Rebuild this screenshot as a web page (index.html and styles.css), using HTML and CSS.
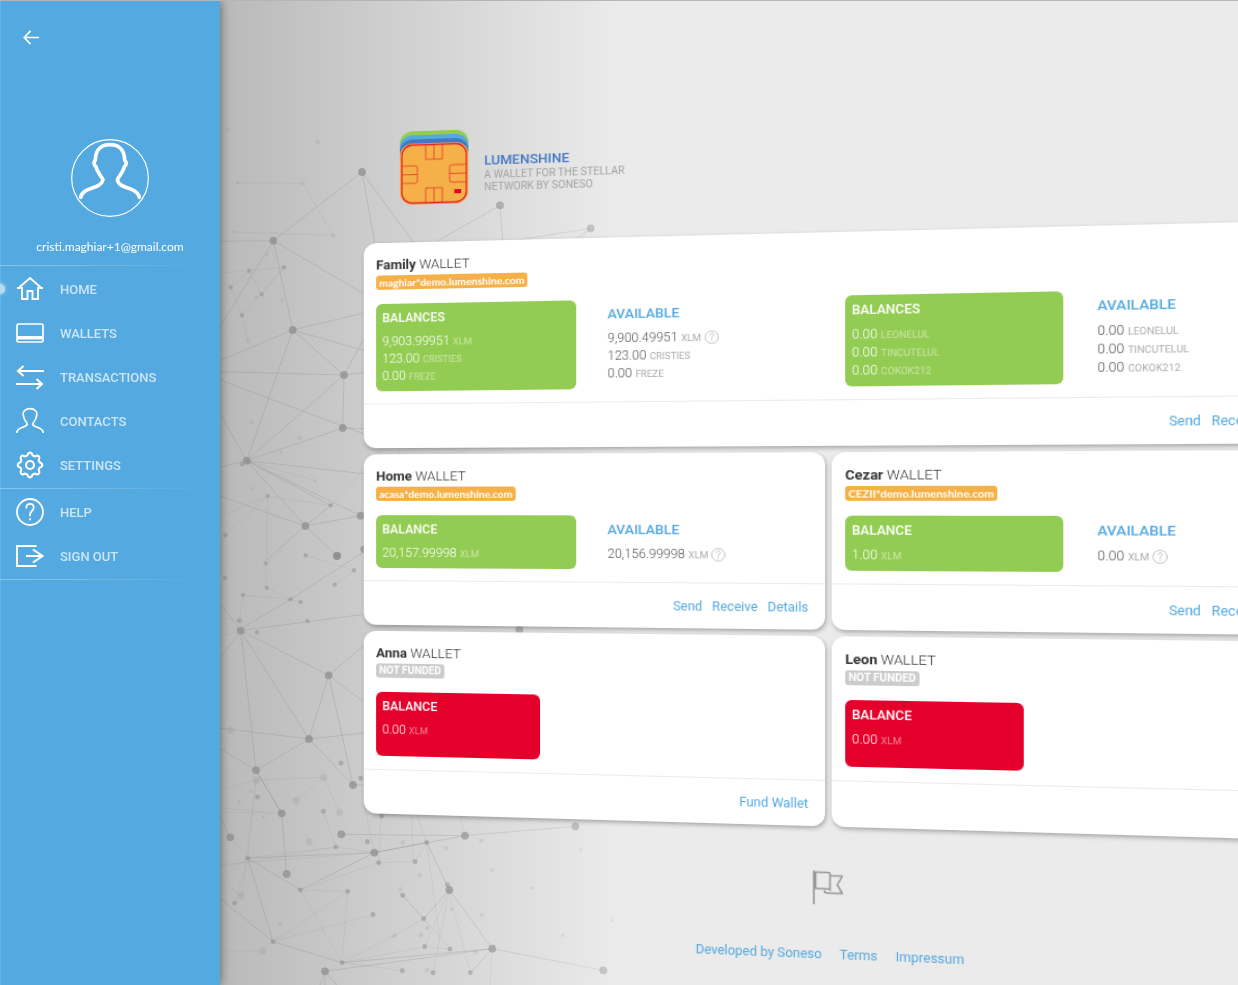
FILE: index.html
```html
<!DOCTYPE html>
<html lang="en">
<head>
<meta charset="utf-8">
<title>Lumenshine</title>
<meta name="viewport" content="width=device-width, initial-scale=1">
<link rel="stylesheet" href="styles.css">
</head>
<body>
<svg class="defs" aria-hidden="true">
  <symbol id="help" viewBox="0 0 28 28">
    <g fill="none" stroke="currentColor" stroke-width="1.8" stroke-linecap="round">
      <circle cx="14" cy="14" r="13"/>
      <path d="M10.3 9.6C10.5 4.5 17.7 4.500 17.7 9.600C17.700 12.800 14 12.800 14 17V17.500"/>
      <path d="M14 21v.6"/>
    </g>
  </symbol>
</svg>
<div class="app">
  <aside class="sidebar">
    <button class="back" type="button" aria-label="Close menu">
      <svg viewBox="0 0 18 16"><path d="M17 8H1.500M8 1L1.200 8L8 15" fill="none" stroke="currentColor" stroke-width="1.800"/></svg>
    </button>
    <div class="profile">
      <svg class="avatar" viewBox="213 417 234 234" aria-hidden="true">
        <g fill="none" stroke="#fff">
          <circle cx="330" cy="534" r="115" stroke-width="3.500"/>
          <path stroke-width="11" stroke-linecap="round" stroke-linejoin="round" d="M242 592C250 558 302 570 309 539C305 530 291 516 288 500C280 494 281 484 286 481C286 448 306 434 330 434C354 434 374 448 374 481C380 484 381 494 373 500C370 516 356 530 352 539C358 570 410 558 418 592"/>
        </g>
      </svg>
      <p class="email">cristi.maghiar+1@gmail.com</p>
    </div>
    <nav class="nav">
      <a class="item active" href="#">
        <svg class="icon" viewBox="0 0 28 28"><path d="M2 13.500L14 3L26 13.500M1 13H6V24H11.500V16H16.500V24H22V13H27" fill="none" stroke="currentColor" stroke-width="1.900"/></svg>
        <span>HOME</span>
      </a>
      <a class="item" href="#">
        <svg class="icon" viewBox="0 0 28 28"><rect x="1" y="5" width="26" height="18" rx="1.500" fill="none" stroke="currentColor" stroke-width="1.700"/><path d="M1.500 17H26.500V20.500H1.500Z" fill="currentColor"/></svg>
        <span>WALLETS</span>
      </a>
      <a class="item" href="#">
        <svg class="icon" viewBox="0 0 28 28"><path d="M28 8H2M7.500 3L2 8L7.500 13M0 21H26M20.500 16L26 21L20.500 26" fill="none" stroke="currentColor" stroke-width="2"/></svg>
        <span>TRANSACTIONS</span>
      </a>
      <a class="item" href="#">
        <svg class="icon" viewBox="48 442 84 84"><path d="M50 520C51 500 78 506 82 494C80 486 72 482 71 471C65 456 77 447 90 447C103 447 115 456 109 471C108 482 100 486 98 494C102 506 129 500 130 520" fill="none" stroke="currentColor" stroke-width="5"/></svg>
        <span>CONTACTS</span>
      </a>
      <a class="item" href="#">
        <svg class="icon" viewBox="-14 -14 28 28"><g fill="none" stroke="currentColor" stroke-width="2.200"><circle r="4"/><path d="M11 -2A2.200 2.200 0 0 1 11 2A2.900 2.900 0 0 0 9.200 6.400A2.200 2.200 0 0 1 6.400 9.200A2.900 2.900 0 0 0 2 11A2.200 2.200 0 0 1 -2 11A2.900 2.900 0 0 0 -6.400 9.200A2.200 2.200 0 0 1 -9.200 6.400A2.900 2.900 0 0 0 -11 2A2.200 2.200 0 0 1 -11 -2A2.900 2.900 0 0 0 -9.200 -6.400A2.200 2.200 0 0 1 -6.400 -9.200A2.900 2.900 0 0 0 -2 -11A2.200 2.200 0 0 1 2 -11A2.900 2.900 0 0 0 6.400 -9.200A2.200 2.200 0 0 1 9.200 -6.400A2.900 2.900 0 0 0 11 -2Z"/></g></svg>
        <span>SETTINGS</span>
      </a>
    </nav>
    <nav class="nav nav-last">
      <a class="item" href="#">
        <svg class="icon"><use href="#help"/></svg>
        <span>HELP</span>
      </a>
      <a class="item" href="#">
        <svg class="icon" viewBox="0 0 28 28"><path d="M20.500 4H1V24H20.500M10 14H26.500M17 7.500L26.500 14L17 20.500" fill="none" stroke="currentColor" stroke-width="2"/></svg>
        <span>SIGN OUT</span>
      </a>
    </nav>
  </aside>

  <main class="main">
    <svg class="mesh" viewBox="0 0 3054 2955" preserveAspectRatio="xMinYMin meet" aria-hidden="true">
      <g transform="translate(0 360)">
        <g class="lines">
          <path d="M0 364L160 362L426 156L466 380M426 156L590 380M160 362L0 620M160 362L440 526M160 362L218 630L440 577M218 630L0 722M218 630L440 694M218 630L372 765L440 756M218 630L80 1022L0 880M0 755L372 765L368 924L440 926M0 780L440 945M368 924L80 1022L372 765L440 640M80 1022L0 1042M80 1022L440 1062M80 1022L256 1218L0 1128M80 1022L332 1156L256 1218L422 1187M80 1022L422 1187M256 1218L351 1308M256 1218L140 1320M640 370L840 256L849 370M880 362L1112 325L1060 360M1112 325L1080 356"/>
        </g>
        <g class="lines faint">
          <path d="M52 188L248 190L340 346M44 336L340 346M32 502L87 452L0 460M125 523L192 442L87 452L125 523M32 502L66 586L0 640M66 586L84 664M192 442L66 586M143 1128L0 1190M143 1128L140 1320M143 1128L332 1156M332 1156L440 1040M80 1022L284 1082M16 1246L143 1128M490 984L440 1040M536 990V1002M690 985L740 1000"/>
        </g>
        <g class="big">
          <circle cx="160" cy="362" r="11"/><circle cx="426" cy="156" r="11"/><circle cx="218" cy="630" r="11"/><circle cx="372" cy="765" r="11"/><circle cx="368" cy="924" r="11"/><circle cx="80" cy="1022" r="11"/><circle cx="256" cy="1218" r="11"/><circle cx="351" cy="1308" r="11"/><circle cx="422" cy="1187" r="11"/><circle cx="432" cy="1288" r="10"/><circle cx="840" cy="256" r="11"/><circle cx="1112" cy="325" r="11"/>
        </g>
        <g class="small">
          <circle cx="32" cy="502" r="6"/><circle cx="87" cy="452" r="6"/><circle cx="125" cy="523" r="6"/><circle cx="192" cy="442" r="6"/><circle cx="66" cy="586" r="6"/><circle cx="143" cy="1128" r="6"/><circle cx="332" cy="1156" r="6"/><circle cx="16" cy="1246" r="6"/><circle cx="257" cy="1306" r="6"/><circle cx="66" cy="1033" r="6"/>
        </g>
        <g class="ghost">
          <circle cx="24" cy="28" r="7"/><circle cx="293" cy="66" r="7"/><circle cx="52" cy="188" r="6"/><circle cx="248" cy="190" r="6"/><circle cx="44" cy="336" r="6"/><circle cx="340" cy="346" r="6"/><circle cx="141" cy="404" r="6"/><circle cx="108" cy="532" r="6"/><circle cx="187" cy="539" r="6"/><circle cx="84" cy="664" r="6"/><circle cx="95" cy="907" r="6"/><circle cx="239" cy="953" r="6"/><circle cx="183" cy="996" r="5"/><circle cx="284" cy="1082" r="5"/><circle cx="98" cy="1105" r="5"/>
        </g>
      </g>
      <g transform="translate(0 1650)">
        <g class="lines">
          <path d="M62 242L0 160M62 242L0 325M62 242L326 376L440 280M62 242L108 661L0 595M62 242L267 567L326 376L399 705L267 567L108 661L185 790L200 972M0 534L267 567L440 548M326 376L440 462M399 705H430M0 800L31 862M62 242L440 192M62 236L212 148L440 0M108 661L185 790M364 853L735 857L1066 829M463 908L735 857M463 908L83 924M463 908L241 1020L83 924L159 1175L0 1045M620 877L463 908M620 877L688 1020L817 1196L1150 1261M688 1020L611 1106L548 1036M817 1196L366 1238L159 1175M817 1196L315 1264V1305M817 1196L751 1268M315 1264L300 1305M315 1264L350 1305"/>
        </g>
        <g class="lines faint">
          <path d="M0 774L185 790M0 786L185 790M83 924L0 990M463 908L0 944M463 908L432 760M476 938L241 1020M159 1175L459 1094M688 1020L639 1268M688 1020L614 1190M366 1238L383 1024L241 1020L366 1238M817 1196L810 1305M58 212L0 200M62 242L0 260M69 135L58 212M69 135L212 148L242 156M137 40L140 113L212 148M137 40L190 0M257 16L402 61L344 104M108 690L65 1038L0 990M108 690L83 924L44 1059M31 862L83 924L348 891L0 950M366 1238L547 1262M620 877L590 795M620 877L585 935L476 938L483 798M310 784L348 891L463 908M159 1175L383 1024M0 1203L129 1203M611 1106L523 1157L366 1238M614 1190L690 1197L611 1106M614 1190L366 1238M682 1004L751 1268M720 800L735 857M228 752L311 682L108 690M0 720L108 690M574 795L580 935M620 877L660 1170M311 682L359 788"/>
        </g>
        <g class="big">
          <circle cx="351" cy="17" r="11"/><circle cx="62" cy="242" r="11"/><circle cx="326" cy="376" r="11"/><circle cx="267" cy="567" r="11"/><circle cx="108" cy="661" r="11"/><circle cx="185" cy="790" r="11"/><circle cx="399" cy="705" r="11"/><circle cx="31" cy="862" r="11"/><circle cx="364" cy="853" r="11"/><circle cx="463" cy="908" r="11"/><circle cx="200" cy="972" r="11"/><circle cx="735" cy="857" r="11"/><circle cx="1066" cy="829" r="11"/><circle cx="688" cy="1020" r="11"/><circle cx="817" cy="1196" r="11"/><circle cx="315" cy="1264" r="11"/><circle cx="1150" cy="1261" r="11"/><circle cx="898" cy="238" r="11"/>
        </g>
        <g class="small">
          <circle cx="15" cy="83" r="6"/><circle cx="137" cy="40" r="6"/><circle cx="140" cy="113" r="6"/><circle cx="69" cy="135" r="6"/><circle cx="212" cy="148" r="6"/><circle cx="242" cy="156" r="6"/><circle cx="402" cy="61" r="6"/><circle cx="344" cy="104" r="6"/><circle cx="262" cy="213" r="6"/><circle cx="58" cy="212" r="7"/><circle cx="111" cy="247" r="6"/><circle cx="363" cy="639" r="7"/><circle cx="422" cy="685" r="7"/><circle cx="112" cy="741" r="7"/><circle cx="310" cy="784" r="7"/><circle cx="348" cy="891" r="7"/><circle cx="442" cy="875" r="7"/><circle cx="83" cy="924" r="7"/><circle cx="476" cy="938" r="7"/><circle cx="585" cy="935" r="7"/><circle cx="620" cy="877" r="7"/><circle cx="485" cy="798" r="7"/><circle cx="241" cy="1020" r="7"/><circle cx="383" cy="1024" r="7"/><circle cx="44" cy="1059" r="7"/><circle cx="159" cy="1175" r="7"/><circle cx="366" cy="1238" r="7"/><circle cx="459" cy="1094" r="7"/><circle cx="548" cy="1036" r="7"/><circle cx="611" cy="1106" r="7"/><circle cx="682" cy="1004" r="7"/><circle cx="614" cy="1190" r="7"/><circle cx="690" cy="1197" r="7"/><circle cx="547" cy="1262" r="7"/><circle cx="639" cy="1268" r="7"/><circle cx="751" cy="1268" r="7"/>
        </g>
        <g class="ghost">
          <circle cx="32" cy="541" r="11"/><circle cx="109" cy="690" r="11"/><circle cx="311" cy="682" r="11"/><circle cx="228" cy="752" r="11"/><circle cx="359" cy="788" r="10"/><circle cx="267" cy="875" r="11"/><circle cx="63" cy="1038" r="11"/><circle cx="129" cy="1203" r="11"/><circle cx="549" cy="878" r="7"/><circle cx="678" cy="894" r="7"/><circle cx="784" cy="872" r="7"/><circle cx="599" cy="975" r="7"/><circle cx="541" cy="1018" r="7"/><circle cx="817" cy="961" r="6"/><circle cx="936" cy="1014" r="6"/><circle cx="785" cy="1095" r="6"/><circle cx="695" cy="1078" r="6"/><circle cx="1082" cy="899" r="6"/><circle cx="1028" cy="1156" r="6"/><circle cx="1176" cy="1112" r="6"/><circle cx="622" cy="1134" r="7"/><circle cx="603" cy="1155" r="7"/><circle cx="523" cy="1157" r="7"/><circle cx="767" cy="1206" r="7"/><circle cx="622" cy="1260" r="7"/><circle cx="180" cy="1121" r="6"/><circle cx="92" cy="723" r="5"/><circle cx="57" cy="754" r="5"/><circle cx="129" cy="801" r="5"/>
        </g>
      </g>
    </svg>

    <div class="stage">
      <header class="brand">
        <svg class="logo" viewBox="0 0 66 72" aria-hidden="true">
          <rect width="66" height="60" rx="12" fill="#93cc52"/>
          <rect y="4" width="66" height="60" rx="12" fill="#53a9e0"/>
          <rect y="8" width="66" height="60" rx="12" fill="#4179c4"/>
          <rect y="12" width="66" height="60" rx="12" fill="#f5b147"/>
          <g fill="none" stroke="#e4202c">
            <rect x="2" y="13.500" width="62" height="57" rx="10" stroke-width="1.300"/>
            <path stroke-width=".7" d="M25 14V28H41V14M33 14V28M25 70V56H41V70M33 70V56M2 34H15Q17 34 17 36V49Q17 51 15 51H2M2 42.500H17M64 34H50Q48 34 48 36V49Q48 51 50 51H64M48 42.500H64"/>
          </g>
          <rect x="52.500" y="58" width="6.500" height="4" fill="#e4002b"/>
        </svg>
        <div class="brand-text">
          <h1 class="name">LUMENSHINE</h1>
          <p class="tagline">A WALLET FOR THE STELLAR<br>NETWORK BY SONESO</p>
        </div>
      </header>

      <section class="wallets">
        <article class="card wide">
          <h2 class="title"><b>Family</b> WALLET</h2>
          <span class="tag">maghiar*demo.lumenshine.com</span>
          <div class="groups">
            <div class="amounts">
              <div class="box balance"><h3>BALANCES</h3><ul><li>9,903.99951 <small>XLM</small></li><li>123.00 <small>CRISTIES</small></li><li>0.00 <small>FREZE</small></li></ul></div>
              <div class="box available"><h3>AVAILABLE</h3><ul><li>9,900.49951 <small>XLM</small> <button class="hint" type="button" aria-label="About available balance"><svg><use href="#help"/></svg></button></li><li>123.00 <small>CRISTIES</small></li><li>0.00 <small>FREZE</small></li></ul></div>
            </div>
            <div class="amounts">
              <div class="box balance"><h3>BALANCES</h3><ul><li>0.00 <small>LEONELUL</small></li><li>0.00 <small>TINCUTELUL</small></li><li>0.00 <small>COKOK212</small></li></ul></div>
              <div class="box available"><h3>AVAILABLE</h3><ul><li>0.00 <small>LEONELUL</small></li><li>0.00 <small>TINCUTELUL</small></li><li>0.00 <small>COKOK212</small></li></ul></div>
            </div>
          </div>
          <div class="actions"><a href="#">Send</a><a href="#">Receive</a><a href="#">Details</a></div>
        </article>

        <article class="card">
          <h2 class="title"><b>Home</b> WALLET</h2>
          <span class="tag">acasa*demo.lumenshine.com</span>
          <div class="amounts">
            <div class="box balance"><h3>BALANCE</h3><ul><li>20,157.99998 <small>XLM</small></li></ul></div>
            <div class="box available"><h3>AVAILABLE</h3><ul><li>20,156.99998 <small>XLM</small> <button class="hint" type="button" aria-label="About available balance"><svg><use href="#help"/></svg></button></li></ul></div>
          </div>
          <div class="actions"><a href="#">Send</a><a href="#">Receive</a><a href="#">Details</a></div>
        </article>

        <article class="card">
          <h2 class="title"><b>Cezar</b> WALLET</h2>
          <span class="tag">CEZII*demo.lumenshine.com</span>
          <div class="amounts">
            <div class="box balance"><h3>BALANCE</h3><ul><li>1.00 <small>XLM</small></li></ul></div>
            <div class="box available"><h3>AVAILABLE</h3><ul><li>0.00 <small>XLM</small> <button class="hint" type="button" aria-label="About available balance"><svg><use href="#help"/></svg></button></li></ul></div>
          </div>
          <div class="actions"><a href="#">Send</a><a href="#">Receive</a><a href="#">Details</a></div>
        </article>

        <article class="card">
          <h2 class="title"><b>Anna</b> WALLET</h2>
          <span class="tag muted">NOT FUNDED</span>
          <div class="amounts unfunded">
            <div class="box balance"><h3>BALANCE</h3><ul><li>0.00 <small>XLM</small></li></ul></div>
          </div>
          <div class="actions"><a href="#">Fund Wallet</a></div>
        </article>

        <article class="card">
          <h2 class="title"><b>Leon</b> WALLET</h2>
          <span class="tag muted">NOT FUNDED</span>
          <div class="amounts unfunded">
            <div class="box balance"><h3>BALANCE</h3><ul><li>0.00 <small>XLM</small></li></ul></div>
          </div>
          <div class="actions"><a href="#">Fund Wallet</a></div>
        </article>
      </section>

      <footer class="footer">
        <button class="flag" type="button" aria-label="Language">
          <svg viewBox="0 0 28 32"><g fill="none" stroke="currentColor" stroke-width="1.600" stroke-linejoin="round"><path d="M1 0V32M2.500 1.500H14Q15.500 1.500 15.500 3V17H2.500ZM15.500 4.500H26.500L22 13L26.500 21H13Q10.500 21 10.500 18.500M15.500 17V19"/></g></svg>
        </button>
        <div class="links"><a href="#">Developed by Soneso</a><a href="#">Terms</a><a href="#">Impressum</a></div>
      </footer>
    </div>
  </main>
</div>
</body>
</html>
```

FILE: styles.css
```css
* { box-sizing: border-box; }

body, h1, h2, h3, p, ul { margin: 0; padding: 0; }

body {
  font-family: Roboto, "Open Sans", sans-serif;
  color: #333;
  background: #ebebeb;
}

ul { list-style: none; }

a { color: #53a9e0; text-decoration: none; }

button {
  padding: 0;
  border: 0;
  background: none;
  color: inherit;
  font: inherit;
  cursor: pointer;
}

svg { display: block; }

.defs { position: absolute; width: 0; height: 0; }

.app {
  display: flex;
  min-height: 100vh;
  border-top: 1px solid #b5b5b5;
  overflow: hidden;
}

/* Sidebar */

.sidebar {
  position: relative;
  z-index: 1;
  flex: none;
  width: 220px;
  padding-top: 28px;
  background: #53a9e0;
  box-shadow: 0 0 10px rgba(0, 0, 0, .5), inset 1px 0 #69b4e4;
  color: #fff;
}

.back { display: block; margin-left: 23px; }
.back svg { width: 17px; height: 17px; }

.profile {
  display: flex;
  flex-direction: column;
  align-items: center;
  gap: 21px;
  padding: 93px 0 9px;
}

.avatar { width: 78px; height: 78px; }

.email {
  font-family: Lato, "Open Sans", sans-serif;
  font-size: 12px;
  line-height: 18px;
}

.nav {
  padding: 1px 0;
  border-top: 1px solid;
  border-image: linear-gradient(90deg, #8ec6eb, #53a9e0 95%) 1;
}

.nav-last { border-bottom: 1px solid; }

.item {
  position: relative;
  display: flex;
  align-items: center;
  gap: 16px;
  height: 44px;
  padding-left: 16px;
  color: #cde6f6;
  font-size: 13px;
  font-weight: 500;
}

.icon { width: 28px; height: 28px; color: #fff; }

.active::before {
  content: "";
  position: absolute;
  left: -5px;
  width: 10px;
  height: 10px;
  border-radius: 50%;
  background: #b5dcf2;
  box-shadow: 0 0 4px #b5dcf2;
}

/* Main stage, turned slightly towards the viewer */

.main {
  position: relative;
  flex: 1;
  min-width: 0;
  perspective: 500px;
  perspective-origin: 0 503px;
  overflow: hidden;
  background: linear-gradient(90deg, #b9b9b9, #cbcbcb 140px, #ebebeb 400px);
}

.mesh {
  position: absolute;
  top: -1px;
  left: 0;
  width: 100%;
  -webkit-mask-image: linear-gradient(90deg, #000 20%, rgba(0, 0, 0, .5) 40%);
  mask-image: linear-gradient(90deg, #000 20%, rgba(0, 0, 0, .5) 40%);
}

.lines { fill: none; stroke: #888; stroke-width: 2; opacity: .42; }
.faint { opacity: .2; }
.big { fill: #8c8c8c; stroke: #8c8c8c; stroke-width: 2; opacity: .7; }
.small { fill: #8c8c8c; stroke: #8c8c8c; stroke-width: 1; opacity: .5; }
.ghost { fill: #8c8c8c; opacity: .18; }

.stage {
  padding: 137px 8px 40px 142px;
  transform: rotateY(-2.7deg);
  transform-origin: 0 503px;
}

.brand {
  display: flex;
  align-items: center;
  gap: 15px;
  margin: 0 0 37px 35px;
}

.logo { width: 66px; height: 72px; }

.brand-text { padding-top: 12px; }

.name {
  color: #4179c4;
  font-size: 13px;
  font-weight: 500;
  line-height: 17px;
}

.tagline { color: #a3a3a3; font-size: 10px; line-height: 12px; }

.wallets {
  display: grid;
  grid-template-columns: 1fr 1fr;
  gap: 6px;
}

.card {
  padding-top: 13px;
  border-radius: 12px;
  background: #fff;
  box-shadow: 1px 2px 4px rgba(0, 0, 0, .3);
}

.wide { grid-column: 1 / -1; }

.title {
  padding: 0 12px;
  font-size: 13px;
  font-weight: 300;
  line-height: 18px;
}

.title b { font-weight: 700; }

.tag {
  display: block;
  width: fit-content;
  margin: 1px 12px 14px;
  padding: 0 3px;
  border-radius: 3px;
  background: #f5b147;
  color: #fff;
  font-family: Lato, "Open Sans", sans-serif;
  font-size: 10px;
  font-weight: 700;
  line-height: 14px;
}

.muted { background: #ccc; font-family: inherit; }

.groups { display: grid; grid-template-columns: 1fr 1fr; gap: 6px; }

.amounts {
  display: grid;
  grid-template-columns: 47% 1fr;
  gap: 29px;
  padding: 0 12px 12px;
}

.box { padding: 6px 0; }

.balance {
  padding-left: 6px;
  border-radius: 6px;
  background: #93cc52;
  color: #fff;
}

.unfunded { grid-template-columns: 157px 1fr; padding-bottom: 13px; }
.unfunded .balance { padding-bottom: 17px; background: #e4002b; }

.box h3 {
  margin-bottom: 7px;
  font-size: 12px;
  font-weight: 500;
  line-height: 16px;
}

.box li {
  display: flex;
  align-items: baseline;
  gap: 3px;
  height: 17px;
  font-size: 12px;
  font-weight: 300;
  line-height: 17px;
}

.box small { font-size: 9px; font-weight: 400; opacity: .5; }
.available h3 { color: #53a9e0; font-size: 13px; }
.available li { color: #555; }

.hint { align-self: center; color: #bbb; }
.hint svg { width: 13px; height: 13px; }

.actions {
  display: flex;
  justify-content: flex-end;
  gap: 9px;
  padding: 13px 15px 12px;
  border-top: 1px solid #ebebeb;
  font-size: 12px;
  line-height: 18px;
}

.footer {
  display: flex;
  flex-direction: column;
  align-items: center;
  gap: 38px;
  padding-top: 42px;
}

.flag { color: #999; }
.flag svg { width: 28px; height: 32px; }

.links { display: flex; gap: 16px; font-size: 12px; line-height: 18px; }
```
